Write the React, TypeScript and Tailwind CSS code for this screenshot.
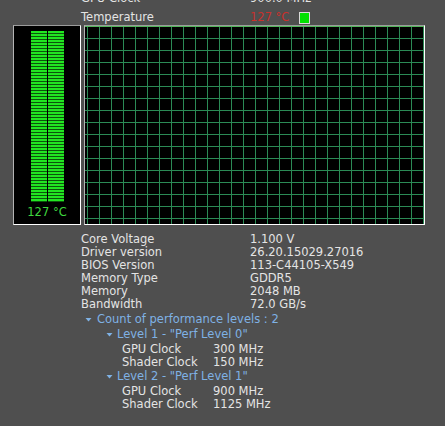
import React from "react";

const info = [
  ["Core Voltage", "1.100 V"],
  ["Driver version", "26.20.15029.27016"],
  ["BIOS Version", "113-C44105-X549"],
  ["Memory Type", "GDDR5"],
  ["Memory", "2048 MB"],
  ["Bandwidth", "72.0 GB/s"],
];

const levels = [
  { name: 'Level 1 - "Perf Level 0"', gpu: "300 MHz", shader: "150 MHz" },
  { name: 'Level 2 - "Perf Level 1"', gpu: "900 MHz", shader: "1125 MHz" },
];

const Caret = () => (
  <svg width="7" height="5" viewBox="0 0 7 5" className="shrink-0">
    <polygon points="0.5,1 6.5,1 3.5,4.5" fill="#7fb2e5" />
  </svg>
);

const Graph = () => {
  const w = 339;
  const h = 198;
  const xs = Array.from({ length: 29 }, (_, i) => 2 + i * 12);
  const ys = Array.from({ length: 17 }, (_, i) => i * 12);
  return (
    <svg width={w} height={h} className="block">
      <rect width={w} height={h} fill="#000" />
      {xs.map((x) => (
        <line key={"v" + x} x1={x + 0.5} y1={0} x2={x + 0.5} y2={h} stroke="#2b8a55" strokeWidth={1} />
      ))}
      {ys.map((y) => (
        <line
          key={"h" + y}
          x1={0}
          y1={y + 0.5}
          x2={w}
          y2={y + 0.5}
          stroke={y === 0 ? "#52b55a" : "#2b8a55"}
          strokeWidth={1}
        />
      ))}
    </svg>
  );
};

const Gauge = () => (
  <div className="w-[68px] h-[200px] bg-black border border-t-[#9c9c9c] border-l-[#b4b4b4] border-r-white border-b-white flex flex-col items-center">
    <div className="mt-[5px] ml-[1px] flex h-[171px] gap-[1px]">
      <div className="w-[16px] h-full bg-[repeating-linear-gradient(to_bottom,#22e622_0px,#22e622_2px,#0c560c_2px,#0c560c_3px)]" />
      <div className="w-[16px] h-full bg-[repeating-linear-gradient(to_bottom,#22e622_0px,#22e622_2px,#0c560c_2px,#0c560c_3px)]" />
    </div>
    <div className="mt-[3px] leading-[14px] text-[#3fd63f]">127 °C</div>
  </div>
);

export default function App() {
  return (
    <div className="w-[445px] h-[426px] overflow-hidden bg-[#4f4f4f] text-[#e4e4e4] text-[11.5px] leading-[13px] font-['DejaVu_Sans',sans-serif]">
      <div className="-mt-[8px] pl-[81px]">
        <div className="flex h-[13px]">
          <div className="w-[169px]">GPU Clock</div>
          <div>900.0 MHz</div>
        </div>
        <div className="mt-[6px] flex h-[13px]">
          <div className="w-[169px]">Temperature</div>
          <div className="flex items-center gap-[10px]">
            <span className="text-[#c9302c]">127 °C</span>
            <span className="w-[11px] h-[12px] bg-[#00e000] border border-[#d8d8d8]" />
          </div>
        </div>
      </div>

      <div className="mt-[1px] pl-[13px] flex gap-[3px]">
        <Gauge />
        <div className="w-[341px] h-[200px] border border-t-[#9c9c9c] border-l-[#b4b4b4] border-r-white border-b-white">
          <Graph />
        </div>
      </div>

      <div className="mt-[8px] pl-[81px]">
        {info.map(([k, v]) => (
          <div key={k} className="flex h-[13px]">
            <div className="w-[169px]">{k}</div>
            <div>{v}</div>
          </div>
        ))}
      </div>

      <div className="mt-[1px] text-[#7fb2e5]">
        <div className="flex items-center h-[15px] pl-[85px] gap-[5px]">
          <Caret />
          <span>Count of performance levels : 2</span>
        </div>
        {levels.map((l) => (
          <div key={l.name}>
            <div className="flex items-center h-[15px] pl-[106px] gap-[4px]">
              <Caret />
              <span>{l.name}</span>
            </div>
            <div className="mt-[1px] pl-[122px] text-[#e4e4e4]">
              <div className="flex h-[13px]">
                <div className="w-[91px]">GPU Clock</div>
                <div>{l.gpu}</div>
              </div>
              <div className="flex h-[13px]">
                <div className="w-[91px]">Shader Clock</div>
                <div>{l.shader}</div>
              </div>
            </div>
          </div>
        ))}
      </div>
    </div>
  );
}
